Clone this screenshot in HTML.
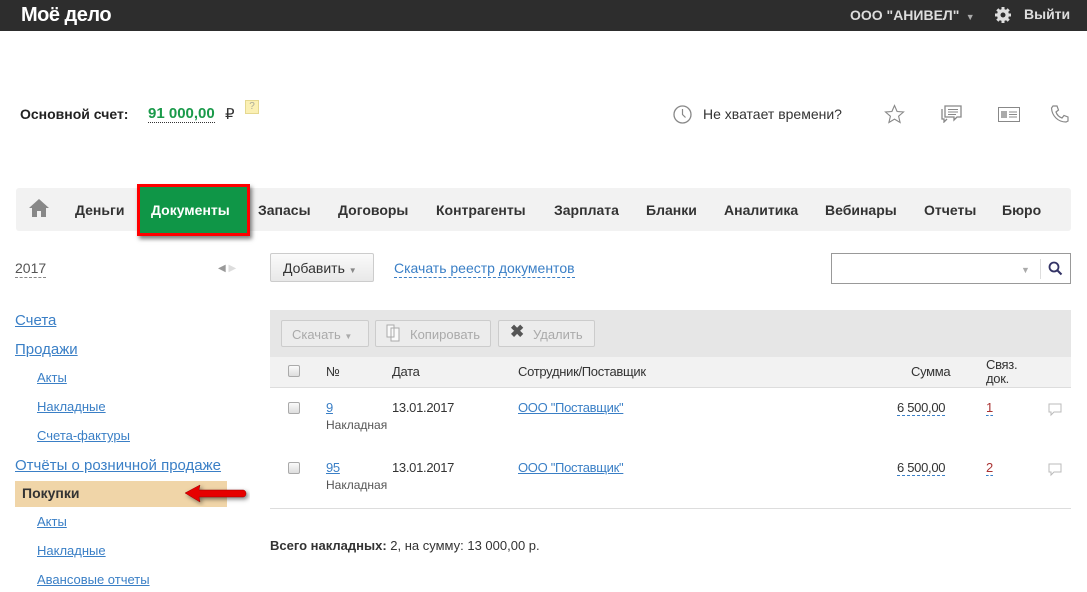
<!DOCTYPE html>
<html><head><meta charset="utf-8"><style>
*{margin:0;padding:0;box-sizing:border-box}
body{width:1087px;height:592px;overflow:hidden;background:#fff;font-family:"Liberation Sans",Arial,sans-serif;color:#333;position:relative}
.a{position:absolute;white-space:nowrap}
.top{position:absolute;left:0;top:0;width:1087px;height:31px;background:#2d2d2d}
.lnk{color:#3a7fc6;text-decoration:underline}
.nav{position:absolute;left:16px;top:188px;width:1055px;height:43px;background:#f2f2f2;border-radius:3px}
.nav span{position:absolute;top:14px;font-size:14px;font-weight:bold;color:#333}
.cond{font-size:13px;letter-spacing:-0.3px}
.dash{border-bottom:1px dashed #3a7fc6}
.cb{position:absolute;width:12px;height:12px;border:1px solid #aaa;border-radius:2px;background:linear-gradient(#fafafa,#ddd)}
.btn{position:absolute;height:27px;border:1px solid #ccc;border-radius:2px;background:#ececec;color:#aaa;font-size:13px;padding:6px 10px}
</style></head><body>
<div class="top"></div>
<div class="a" style="left:21px;top:4px;color:#fff;font-size:20px;font-weight:bold;letter-spacing:-0.5px">Моё дело</div>
<div class="a" style="left:850px;top:7px;color:#ddd;font-size:14px;font-weight:bold">ООО "АНИВЕЛ" <span style="font-size:9px;color:#aaa">&nbsp;▼</span></div>
<svg class="a" style="left:994px;top:6px" width="18" height="18" viewBox="0 0 18 18"><circle cx="9" cy="9" r="6" fill="#ddd"/><g stroke="#ddd" stroke-width="3"><path d="M9 1v16M1 9h16M3.3 3.3l11.4 11.4M14.7 3.3L3.3 14.7"/></g><circle cx="9" cy="9" r="2.5" fill="#2d2d2d"/></svg>
<div class="a" style="left:1024px;top:6px;color:#ddd;font-size:14px;font-weight:bold">Выйти</div>

<div class="a" style="left:20px;top:106px;font-size:14px;font-weight:bold;color:#222">Основной счет:</div>
<div class="a" style="left:148px;top:105px;font-size:15px;font-weight:bold;color:#1a9a4a;border-bottom:1px dotted #333;line-height:17px">91 000,00</div>
<div class="a" style="left:225px;top:105px;font-size:15px;color:#333">₽</div>
<div class="a" style="left:245px;top:100px;width:14px;height:14px;background:#fbf0b4;border:1px solid #e5d890;font-size:10px;color:#aa9;text-align:center;line-height:12px">?</div>

<svg class="a" style="left:673px;top:105px" width="19" height="19" viewBox="0 0 19 19"><circle cx="9.5" cy="9.5" r="8.5" fill="none" stroke="#888" stroke-width="1.3"/><path d="M9.5 4v5.5l3 3" fill="none" stroke="#888" stroke-width="1.2"/></svg>
<div class="a" style="left:703px;top:106px;font-size:14px;color:#333">Не хватает времени?</div>
<svg class="a" style="left:884px;top:104px" width="21" height="20" viewBox="0 0 21 20"><path d="M10.5 1.5l2.6 6 6.4.5-4.9 4.2 1.5 6.3-5.6-3.4-5.6 3.4 1.5-6.3L1.5 8l6.4-.5z" fill="none" stroke="#888" stroke-width="1.1"/></svg>
<svg class="a" style="left:941px;top:105px" width="22" height="18" viewBox="0 0 22 18"><path d="M4 1h16v11h-4l-3 3v-3H4z M1 4v10h2v3l3-3" fill="none" stroke="#888" stroke-width="1.3"/><path d="M7 4.5h10M7 7h10M7 9.5h8" stroke="#888"/></svg>
<svg class="a" style="left:998px;top:107px" width="22" height="15" viewBox="0 0 22 15"><rect x="0.5" y="0.5" width="21" height="14" fill="none" stroke="#888"/><rect x="3" y="4" width="6" height="7" fill="#aaa"/><path d="M11 5h8M11 7.5h8M11 10h8" stroke="#888"/></svg>
<svg class="a" style="left:1050px;top:104px" width="20" height="20" viewBox="0 0 20 20"><path d="M3 2l4 0 1.5 4-2.5 2c1 3 3 5 6 6l2-2.5 4 1.5v4l-2 1C8 18 2 12 1.5 4z" fill="none" stroke="#888" stroke-width="1.2"/></svg>

<div class="nav">
<svg class="a" style="left:12px;top:10px" width="22" height="20" viewBox="0 0 22 20"><path d="M11 1L1 10h3v9h5v-6h4v6h5v-9h3z" fill="#888"/></svg>
<span style="left:59px">Деньги</span>
<span style="left:242px">Запасы</span>
<span style="left:322px">Договоры</span>
<span style="left:420px">Контрагенты</span>
<span style="left:538px">Зарплата</span>
<span style="left:630px">Бланки</span>
<span style="left:708px">Аналитика</span>
<span style="left:809px">Вебинары</span>
<span style="left:908px">Отчеты</span>
<span style="left:986px">Бюро</span>
</div>
<div class="a" style="left:137px;top:184px;width:113px;height:52px;border:3px solid #f00;background:#0f9647;box-shadow:2px 3px 4px rgba(0,0,0,.5)"></div>
<div class="a" style="left:151px;top:202px;font-size:14px;font-weight:bold;color:#fff">Документы</div>

<div class="a" style="left:15px;top:260px;font-size:14px;color:#555;border-bottom:1px dashed #888;line-height:17px">2017</div>
<div class="a" style="left:218px;top:263px;font-size:10px;color:#999">◀ <span style="color:#ddd">▶</span></div>

<div class="a" style="left:270px;top:253px;width:104px;height:29px;border:1px solid #ccc;border-radius:2px;background:linear-gradient(#fafafa,#e8e8e8);font-size:14px;color:#333;padding:6px 12px">Добавить <span style="font-size:8px;color:#888">▼</span></div>
<div class="a" style="left:394px;top:260px;font-size:14px;color:#3a7fc6;border-bottom:1px dashed #3a7fc6;line-height:17px">Скачать реестр документов</div>

<div class="a" style="left:831px;top:253px;width:240px;height:31px;border:1px solid #999"></div>
<div class="a" style="left:1021px;top:265px;font-size:9px;color:#aaa">▼</div>
<div class="a" style="left:1040px;top:259px;width:1px;height:20px;background:#ddd"></div>
<svg class="a" style="left:1048px;top:261px" width="15" height="15" viewBox="0 0 15 15"><circle cx="6" cy="6" r="4.5" fill="none" stroke="#336" stroke-width="1.8"/><path d="M9.5 9.5l4 4" stroke="#336" stroke-width="2"/></svg>

<div class="a lnk" style="left:15px;top:312px;font-size:15px">Счета</div>
<div class="a lnk" style="left:15px;top:341px;font-size:15px">Продажи</div>
<div class="a lnk" style="left:37px;top:370px;font-size:13px">Акты</div>
<div class="a lnk" style="left:37px;top:399px;font-size:13px">Накладные</div>
<div class="a lnk" style="left:37px;top:428px;font-size:13px">Счета-фактуры</div>
<div class="a lnk" style="left:15px;top:457px;font-size:15px">Отчёты о розничной продаже</div>
<div class="a" style="left:15px;top:481px;width:212px;height:26px;background:#f0d5a8"></div>
<div class="a" style="left:22px;top:485px;font-size:14px;font-weight:bold;color:#333">Покупки</div>
<svg class="a" style="left:182px;top:482px" width="68" height="24" viewBox="0 0 68 24"><path d="M3 11L18 3l-1 5h44c4 0 4 7 0 7H17l1 5z" fill="#e60000" stroke="#900" stroke-width="0.5" filter="drop-shadow(2px 2px 2px rgba(0,0,0,.5))"/></svg>
<div class="a lnk" style="left:37px;top:514px;font-size:13px">Акты</div>
<div class="a lnk" style="left:37px;top:543px;font-size:13px">Накладные</div>
<div class="a lnk" style="left:37px;top:572px;font-size:13px">Авансовые отчеты</div>

<div class="a" style="left:270px;top:310px;width:801px;height:78px;background:#e6e6e6"></div>
<div class="a" style="left:270px;top:357px;width:801px;height:31px;background:#f2f2f2;border-bottom:1px solid #ddd"></div>
<div class="btn" style="left:281px;top:320px;width:88px">Скачать <span style="font-size:8px">▼</span></div>
<div class="btn" style="left:375px;top:320px;width:116px;padding-left:34px">Копировать</div>
<svg class="a" style="left:386px;top:324px" width="14" height="18" viewBox="0 0 14 18"><path d="M1 1h7v12H1z M5 4h8v13H5z" fill="#fafafa" stroke="#aaa"/></svg>
<div class="btn" style="left:498px;top:320px;width:97px;padding-left:34px">Удалить</div>
<div class="a" style="left:510px;top:322px;font-size:17px;font-weight:bold;color:#555">✖</div>

<div class="cb" style="left:288px;top:365px"></div>
<div class="a cond" style="left:326px;top:364px">№</div>
<div class="a cond" style="left:392px;top:364px">Дата</div>
<div class="a cond" style="left:518px;top:364px">Сотрудник/Поставщик</div>
<div class="a cond" style="left:911px;top:364px">Сумма</div>
<div class="a cond" style="left:986px;top:358px;line-height:14px">Связ.<br>док.</div>

<div class="cb" style="left:288px;top:402px"></div>
<div class="a cond lnk" style="left:326px;top:400px">9</div>
<div class="a" style="left:326px;top:418px;font-size:12px;color:#555">Накладная</div>
<div class="a cond" style="left:392px;top:400px">13.01.2017</div>
<div class="a cond lnk" style="left:518px;top:400px">ООО "Поставщик"</div>
<div class="a cond dash" style="left:897px;top:400px;line-height:15px">6 500,00</div>
<div class="a cond dash" style="left:986px;top:400px;line-height:15px;color:#a33">1</div>
<svg class="a" style="left:1047px;top:403px" width="16" height="14" viewBox="0 0 16 14"><path d="M2 1h12v8H7l-3 3V9H2z" fill="none" stroke="#bbb"/></svg>

<div class="cb" style="left:288px;top:462px"></div>
<div class="a cond lnk" style="left:326px;top:460px">95</div>
<div class="a" style="left:326px;top:478px;font-size:12px;color:#555">Накладная</div>
<div class="a cond" style="left:392px;top:460px">13.01.2017</div>
<div class="a cond lnk" style="left:518px;top:460px">ООО "Поставщик"</div>
<div class="a cond dash" style="left:897px;top:460px;line-height:15px">6 500,00</div>
<div class="a cond dash" style="left:986px;top:460px;line-height:15px;color:#a33">2</div>
<svg class="a" style="left:1047px;top:463px" width="16" height="14" viewBox="0 0 16 14"><path d="M2 1h12v8H7l-3 3V9H2z" fill="none" stroke="#bbb"/></svg>

<div class="a" style="left:270px;top:508px;width:801px;height:1px;background:#ddd"></div>
<div class="a" style="left:270px;top:538px;font-size:13px;color:#333"><b>Всего накладных:</b> 2, на сумму: 13 000,00 р.</div>
</body></html>
